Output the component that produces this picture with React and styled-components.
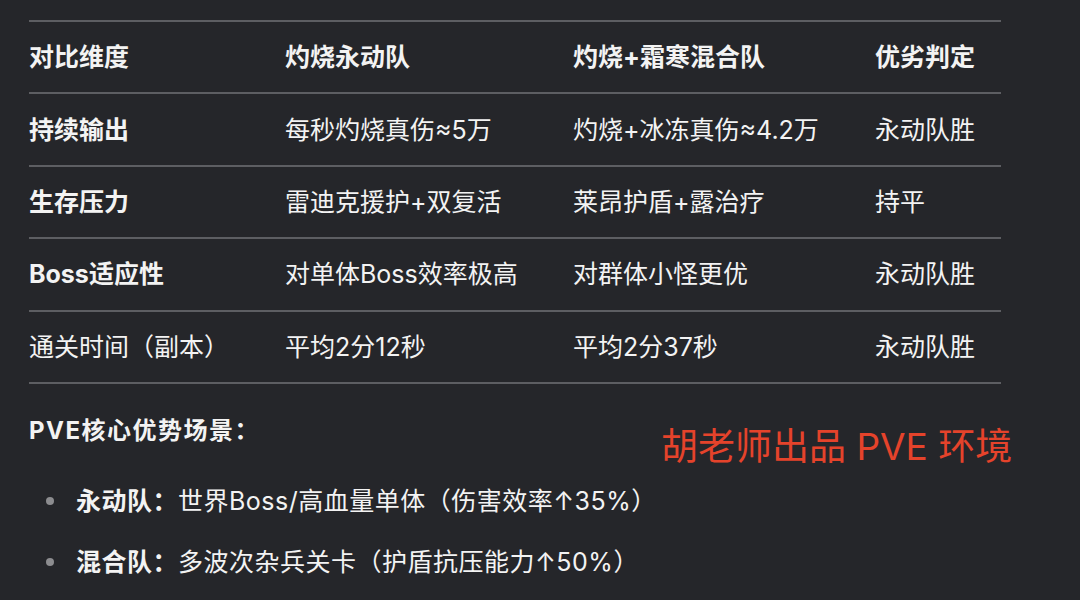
import React from "react";
import styled, { createGlobalStyle } from "styled-components";

const Global = createGlobalStyle`
  html, body {
    margin: 0;
    padding: 0;
    background: #25262a;
  }
  body {
    font-family: Inter, "Noto Sans CJK SC", sans-serif;
    color: #f3f3f3;
  }
`;

const Page = styled.div`
  position: relative;
  width: 1080px;
  height: 600px;
  overflow: hidden;
  background: #25262a;
  padding: 20px 0 0 29px;
  box-sizing: border-box;
`;

const Table = styled.div`
  width: 972px;
  border-top: 2px solid #5d5e62;
`;

const Row = styled.div`
  display: grid;
  grid-template-columns: 256px 288px 302px 126px;
  align-items: center;
  height: 70.4px;
  border-bottom: 2px solid #5d5e62;
`;

const Cell = styled.div`
  font-size: 25px;
  line-height: 32px;
  font-weight: ${(p) => (p.$bold ? 700 : 400)};
  white-space: nowrap;
`;

const Heading = styled.div`
  margin-top: 31px;
  font-size: 24px;
  line-height: 32px;
  font-weight: 700;
  letter-spacing: 1.5px;
`;

const List = styled.ul`
  list-style: none;
  margin: 38px 0 0 0;
  padding: 0;
  display: flex;
  flex-direction: column;
  gap: 29px;
`;

const Item = styled.li`
  display: flex;
  align-items: center;
  font-size: 25px;
  line-height: 32px;
  white-space: nowrap;
  letter-spacing: 0.5px;
  &::before {
    content: "";
    width: 8px;
    height: 8px;
    border-radius: 50%;
    background: #8c8c8f;
    margin: 0 22px 0 17px;
    flex: none;
  }
`;

const Strong = styled.b`
  font-weight: 700;
`;

const Watermark = styled.div`
  position: absolute;
  left: 661px;
  top: 422px;
  font-size: 37px;
  line-height: 50px;
  color: #e5432b;
  font-weight: 400;
  white-space: nowrap;
`;

const rows = [
  { cells: ["对比维度", "灼烧永动队", "灼烧+霜寒混合队", "优劣判定"], header: true },
  { cells: ["持续输出", "每秒灼烧真伤≈5万", "灼烧+冰冻真伤≈4.2万", "永动队胜"], first: true },
  { cells: ["生存压力", "雷迪克援护+双复活", "莱昂护盾+露治疗", "持平"], first: true },
  { cells: ["Boss适应性", "对单体Boss效率极高", "对群体小怪更优", "永动队胜"], first: true },
  { cells: ["通关时间（副本）", "平均2分12秒", "平均2分37秒", "永动队胜"], first: false },
];

export default function App() {
  return (
    <>
      <Global />
      <Page>
        <Table>
          {rows.map((r, i) => (
            <Row key={i}>
              {r.cells.map((c, j) => (
                <Cell key={j} $bold={r.header || (r.first && j === 0)}>
                  {c}
                </Cell>
              ))}
            </Row>
          ))}
        </Table>
        <Heading>PVE核心优势场景：</Heading>
        <List>
          <Item>
            <Strong>永动队：</Strong>世界Boss/高血量单体（伤害效率↑35%）
          </Item>
          <Item>
            <Strong>混合队：</Strong>多波次杂兵关卡（护盾抗压能力↑50%）
          </Item>
        </List>
        <Watermark>胡老师出品 PVE 环境</Watermark>
      </Page>
    </>
  );
}
